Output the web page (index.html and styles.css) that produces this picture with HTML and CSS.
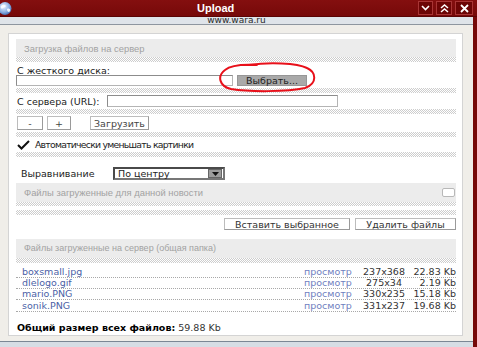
FILE: index.html
```html
<!DOCTYPE html>
<html lang="ru">
<head>
    <meta charset="UTF-8">
    <title>Upload</title>
    <link rel="stylesheet" href="styles.css">
</head>
<body>
    <div class="window">
        <div class="titlebar">
            <svg class="globe" width="14" height="13" viewBox="0 0 14 13">
                <defs>
                    <radialGradient id="g" cx="0.4" cy="0.35" r="0.7">
                        <stop offset="0" stop-color="#eef4fd"/>
                        <stop offset="0.6" stop-color="#8fb2e4"/>
                        <stop offset="1" stop-color="#3d68b0"/>
                    </radialGradient>
                </defs>
                <circle cx="6" cy="6.5" r="6.5" fill="url(#g)"/>
                <path d="M2 4 C4 2,6 3,7 4 C6 6,4 5,3 7 C2 6,1 5,2 4Z M8 7 C10 6,12 7,11 9 C10 11,8 10,8 7Z" fill="#fff" opacity="0.85"/>
            </svg>
            <div class="title">Upload</div>
            <div class="controls">
                <span class="ctl c1"><svg width="9" height="6" viewBox="0 0 9 6"><path d="M1 1 L4.5 4.5 L8 1" fill="none" stroke="#fff" stroke-width="1.6"/></svg></span>
                <span class="ctl c2"><svg width="9" height="9" viewBox="0 0 9 9"><path d="M1 4 L4.5 1 L8 4 M1 8 L4.5 5 L8 8" fill="none" stroke="#fff" stroke-width="1.5"/></svg></span>
                <span class="ctl c3"><svg width="9" height="9" viewBox="0 0 9 9"><path d="M1 1 L8 8 M8 1 L1 8" fill="none" stroke="#fff" stroke-width="1.8"/></svg></span>
            </div>
        </div>

        <div class="frame">
            <div class="client">
                <div class="addr">www.wara.ru</div>

                <div class="body">
                    <div class="panel">
                        <div class="head">Загрузка файлов на сервер</div>
                        <div class="hatch"></div>

                        <div class="label">С жесткого диска:</div>
                        <div class="file-row">
                            <div class="input file-input"></div>
                            <div class="browse">Выбрать...</div>
                            <!-- пометка красным поверх кнопки -->
                            <svg class="mark" width="102" height="31" viewBox="0 0 102 31">
                                <path d="M32 3 C52 0,80 1,90 6 C99 10,101 21,88 26 C70 30,32 30,14 27 C2 24,0 14,8 8 C14 3,24 2,40 3" fill="none" stroke="#e8101a" stroke-width="2" stroke-linecap="round"/>
                            </svg>
                        </div>
                        <div class="hatch gap"></div>

                        <div class="url-row">
                            <span class="url-label">С сервера (URL):</span>
                            <div class="input url-input"></div>
                        </div>
                        <div class="hatch gap"></div>

                        <div class="btn-row">
                            <span class="btn b-minus">-</span>
                            <span class="btn b-plus">+</span>
                            <span class="btn b-load">Загрузить</span>
                        </div>
                        <div class="hatch gap"></div>

                        <div class="check-row">
                            <svg width="13" height="10" viewBox="0 0 13 10"><path d="M1 5 L4.5 8.5 L12 1" fill="none" stroke="#111" stroke-width="2"/></svg>
                            <span class="check-text">Автоматически уменьшать картинки</span>
                        </div>
                        <div class="hatch gap"></div>

                        <div class="align-row">
                            <span class="align-label">Выравнивание</span>
                            <div class="select">
                                <span>По центру</span>
                                <span class="drop"><svg width="7" height="4" viewBox="0 0 7 4"><path d="M0 0 H7 L3.5 4Z" fill="#111"/></svg></span>
                            </div>
                        </div>

                        <div class="info">
                            <span>Файлы загруженные для данной новости</span>
                            <span class="box"></span>
                        </div>
                        <div class="hatch thin"></div>
                        <div class="hatch second"></div>

                        <div class="actions">
                            <span class="btn">Вставить выбранное</span>
                            <span class="btn">Удалить файлы</span>
                        </div>

                        <div class="head head2">Файлы загруженные на сервер (общая папка)</div>
                        <div class="hatch"></div>

                        <div class="files">
                            <div class="frow"><span class="fname">boxsmall.jpg</span><span class="view">просмотр</span><span class="dim">237x368</span><span class="size">22.83 Kb</span></div>
                            <div class="frow"><span class="fname">dlelogo.gif</span><span class="view">просмотр</span><span class="dim">275x34</span><span class="size">2.19 Kb</span></div>
                            <div class="frow"><span class="fname">mario.PNG</span><span class="view">просмотр</span><span class="dim">330x235</span><span class="size">15.18 Kb</span></div>
                            <div class="frow"><span class="fname">sonik.PNG</span><span class="view">просмотр</span><span class="dim">331x237</span><span class="size">19.68 Kb</span></div>
                        </div>

                        <div class="total"><b>Общий размер всех файлов:</b> 59.88 Kb</div>
                    </div>
                </div>

                <div class="status"></div>
            </div>
        </div>
    </div>
</body>
</html>
```

FILE: styles.css
```css
* {
    box-sizing: border-box;
}

body {
    margin: 0;
    width: 477px;
    height: 347px;
    overflow: hidden;
    font-family: "DejaVu Sans", Verdana, sans-serif;
    font-size: 9.5px;
    color: #222;
    background-color: #f0eee9;
}

.window {
    display: flex;
    flex-direction: column;
    height: 347px;
}

/* Заголовок окна */
.titlebar {
    height: 17px;
    background: linear-gradient(#840f0f, #760909);
    border-bottom: 1px solid #5a0404;
    display: flex;
    align-items: center;
}

.globe {
    margin-left: -1px;
    flex: none;
}

.title {
    margin-left: 184px;
    font-family: "Liberation Sans", Arial, sans-serif;
    font-weight: bold;
    font-size: 11px;
    color: #fff;
}

.controls {
    margin-left: auto;
    margin-right: 4px;
    display: flex;
    gap: 3px;
}

.ctl {
    height: 14px;
    background-color: #6c0505;
    border: 1px solid #a83535;
    display: flex;
    align-items: center;
    justify-content: center;
}

.c1 { width: 15px; }
.c2 { width: 16px; }
.c3 { width: 18px; }

.frame {
    flex: 1;
    display: flex;
    border-right: 4px solid #760909;
}

.client {
    flex: 1;
    display: flex;
    flex-direction: column;
}

.addr {
    height: 8px;
    background-color: #dfe4e9;
    border-bottom: 1px solid #8e969f;
    text-align: center;
    font-size: 9px;
    line-height: 7px;
    color: #2a2a2a;
}

.body {
    flex: 1;
    padding: 8px 10px 5px 8px;
    display: flex;
}

.status {
    height: 6px;
    border-top: 1px solid #7b8794;
    background-color: #d6dde4;
}

/* Белая панель с формой */
.panel {
    flex: 1;
    background-color: #fff;
    border: 1px solid #d4d4d4;
    padding: 5px 6px 0 7px;
    display: flex;
    flex-direction: column;
}

.head {
    height: 18px;
    background-color: #ececec;
    color: #a2a2a2;
    font-family: "Liberation Sans", Arial, sans-serif;
    font-size: 9.4px;
    line-height: 19px;
    padding-left: 8px;
}

.head2 {
    height: 19px;
    margin-top: 9px;
    font-size: 9px;
}

.hatch {
    height: 5px;
    background: repeating-conic-gradient(#cdcdcd 0 25%, #fff 0 50%) 0 0 / 2px 2px;
}

.hatch.gap {
    margin-top: 2px;
}

.hatch.thin {
    height: 4px;
}

.hatch.second {
    margin-top: 4px;
}

.label {
    height: 13px;
    line-height: 17px;
    padding-left: 1px;
}

.input {
    background-color: #fff;
    border: 1px solid #b4b4b4;
    border-top-color: #8c8c8c;
    border-left-color: #8c8c8c;
}

.file-row {
    height: 11px;
    display: flex;
    gap: 4px;
    position: relative;
}

.file-input {
    width: 217px;
}

.browse {
    width: 70px;
    background-color: #a9a9a9;
    border: 1px solid #969696;
    color: #1e1e1e;
    text-align: center;
    line-height: 10px;
}

.mark {
    position: absolute;
    left: 201px;
    top: -13px;
}

.url-row {
    margin-top: 2px;
    height: 12px;
    display: flex;
    align-items: center;
}

.url-label {
    width: 91px;
    padding-left: 1px;
}

.url-input {
    width: 231px;
    height: 12px;
}

.btn-row {
    margin-top: 2px;
    height: 14px;
    display: flex;
    gap: 4px;
}

.btn {
    background-color: #fff;
    border: 1px solid #bcbcbc;
    border-right-color: #9a9a9a;
    border-bottom-color: #9a9a9a;
    color: #444;
    display: flex;
    align-items: center;
    justify-content: center;
}

.b-minus {
    width: 26px;
    margin-left: 1px;
}

.b-plus {
    width: 24px;
}

.b-load {
    width: 59px;
    margin-left: 15px;
}

.check-row {
    margin-top: 2px;
    height: 11px;
    display: flex;
    align-items: center;
    gap: 5px;
    padding-left: 1px;
}

.check-text {
    font-size: 9.3px;
    letter-spacing: -0.75px;
}

.align-row {
    margin-top: 10px;
    height: 13px;
    display: flex;
    align-items: center;
    padding-left: 5px;
}

.align-label {
    width: 92px;
}

.select {
    width: 112px;
    height: 13px;
    border: 2px solid #4a4a4a;
    border-right-color: #777;
    border-bottom-color: #777;
    display: flex;
    align-items: center;
    padding-left: 3px;
    justify-content: space-between;
}

.drop {
    width: 14px;
    height: 9px;
    background-color: #9c9c9c;
    border: 1px solid #666;
    display: flex;
    align-items: center;
    justify-content: center;
    margin-right: 1px;
}

.info {
    margin-top: 3px;
    height: 19px;
    background-color: #ececec;
    color: #a2a2a2;
    font-family: "Liberation Sans", Arial, sans-serif;
    font-size: 9.4px;
    display: flex;
    align-items: center;
    justify-content: space-between;
    padding: 0 1px 0 8px;
}

.box {
    width: 13px;
    height: 9px;
    background-color: #fff;
    border: 1px solid #b8b8b8;
    border-radius: 2px;
}

.actions {
    margin-top: 3px;
    height: 12px;
    display: flex;
    justify-content: flex-end;
    gap: 5px;
}

.actions .btn {
    color: #333;
}

.actions .btn:first-child {
    width: 126px;
}

.actions .btn:last-child {
    width: 101px;
}

/* Список файлов */
.files {
    margin-top: 4px;
}

.frow {
    height: 11px;
    border-bottom: 1px dotted #a8a8a8;
    display: grid;
    grid-template-columns: 282px 52px 56px 1fr;
    padding-left: 6px;
    line-height: 10px;
}

.frow:last-child {
    height: 12px;
    line-height: 11px;
}

.fname {
    color: #4b5fa6;
}

.view {
    color: #6f80c0;
}

.dim {
    text-align: center;
    color: #333;
}

.size {
    text-align: right;
    color: #333;
}

.total {
    margin-top: 10px;
    padding-left: 1px;
    line-height: 12px;
    color: #333;
}

.total b {
    color: #000;
}
```
